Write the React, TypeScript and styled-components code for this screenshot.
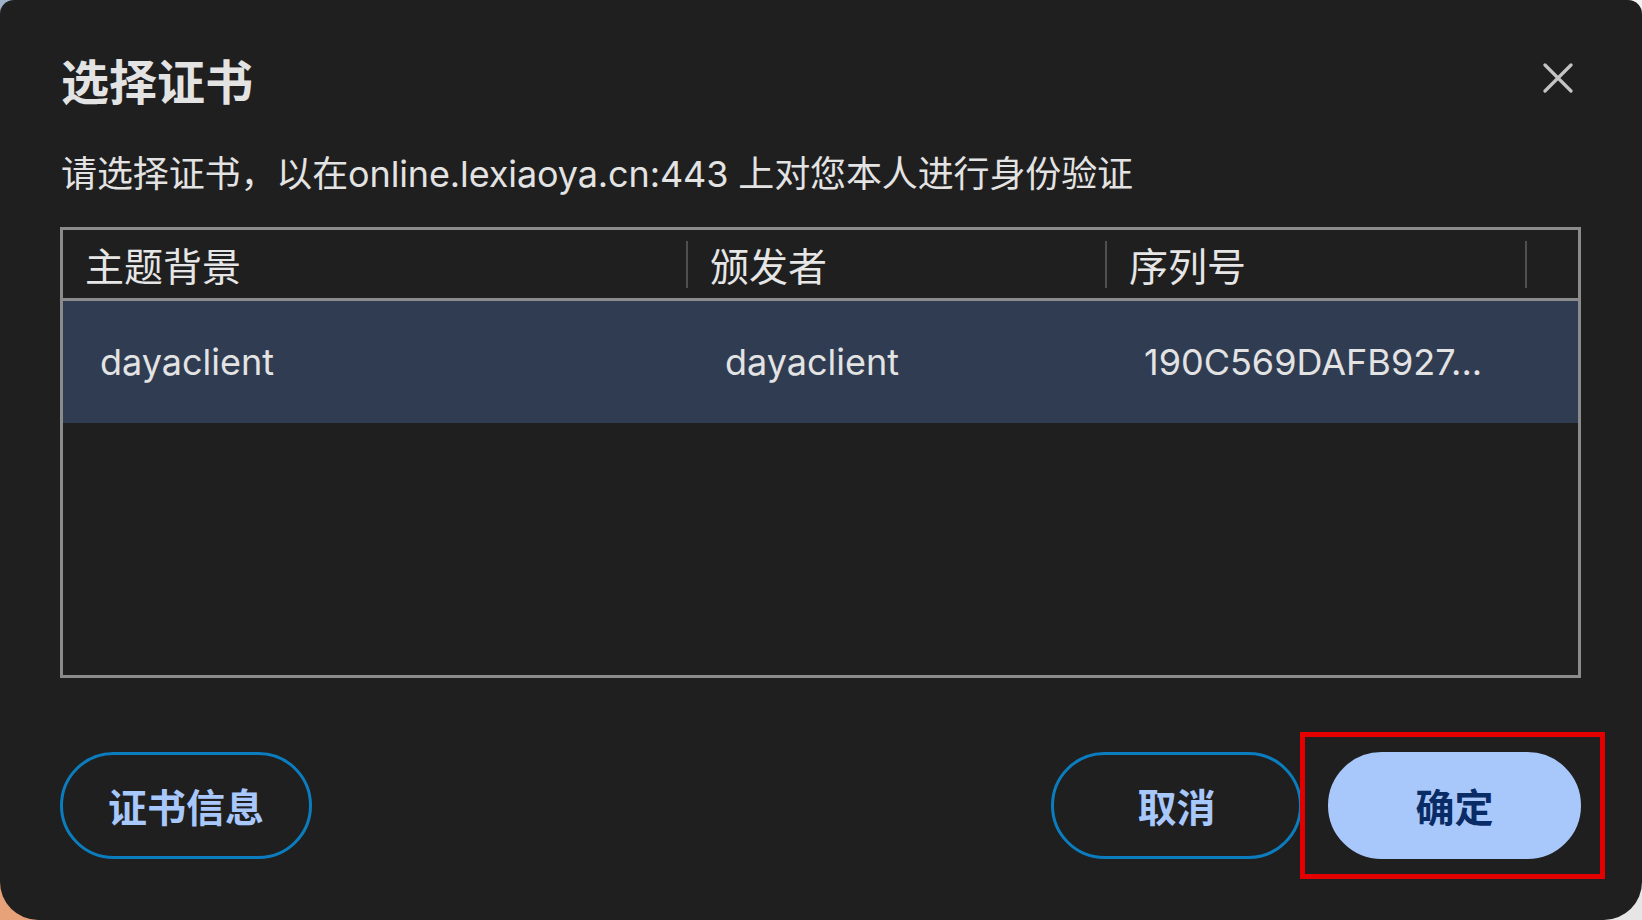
import React from "react";
import styled, { createGlobalStyle } from "styled-components";

const GlobalStyle = createGlobalStyle`
  html, body {
    margin: 0;
    padding: 0;
  }
  body {
    width: 1642px;
    height: 920px;
    overflow: hidden;
    background:
      linear-gradient(to right, #9fb1c9 0 50%, #f2f2f2 50% 100%) top / 100% 50% no-repeat,
      linear-gradient(to right, #e8a27a 0 50%, #e6e6e6 50% 100%) bottom / 100% 50% no-repeat;
    font-family: "Inter", "Noto Sans CJK SC", sans-serif;
  }
  * { box-sizing: border-box; }
`;

const Dialog = styled.div`
  width: 1642px;
  height: 920px;
  background: #1f1f1f;
  border-radius: 14px 14px 38px 38px;
  padding: 55px 61px 61px 60px;
  display: flex;
  flex-direction: column;
  color: #e3e3e3;
`;

const Header = styled.div`
  display: flex;
  align-items: center;
  justify-content: space-between;
  height: 48px;
`;

const Title = styled.h1`
  margin: 0;
  font-family: "Noto Sans CJK SC", sans-serif;
  font-size: 48px;
  line-height: 48px;
  font-weight: 700;
  color: #e3e3e3;
  padding-left: 1px;
`;

const CloseButton = styled.button`
  width: 46px;
  height: 46px;
  border: none;
  background: transparent;
  padding: 0;
  display: flex;
  align-items: center;
  justify-content: center;
  margin-top: -2px;
  cursor: pointer;
`;

const Subtitle = styled.p`
  margin: 53px 0 0 1px;
  font-size: 36px;
  line-height: 36px;
  letter-spacing: -0.12px;
  color: #e3e3e3;
  white-space: nowrap;
`;

const Table = styled.div`
  margin-top: 35px;
  height: 451px;
  border: 3px solid #8b8b8b;
  display: flex;
  flex-direction: column;
`;

const HeadRow = styled.div`
  display: grid;
  grid-template-columns: 625px 419px 420px 1fr;
  height: 71px;
  border-bottom: 3px solid #8b8b8b;
`;

const HeadCell = styled.div`
  display: flex;
  align-items: center;
  padding-left: 22px;
  font-family: "Noto Sans CJK SC", sans-serif;
  font-size: 39px;
  line-height: 39px;
  color: #e6e6e6;
`;

const Divider = styled.span`
  margin-left: auto;
  width: 2px;
  height: 47px;
  background: #4f4f4f;
`;

const DataRow = styled.div<{ $selected?: boolean }>`
  display: grid;
  grid-template-columns: 625px 419px 420px 1fr;
  height: 122px;
  background: ${(p) => (p.$selected ? "#303c52" : "transparent")};
`;

const DataCell = styled.div`
  display: flex;
  align-items: center;
  padding-left: 37px;
  font-size: 36px;
  line-height: 36px;
  color: #e3e3e3;
  white-space: nowrap;
`;

const Footer = styled.div`
  margin-top: auto;
  display: flex;
  align-items: center;
  justify-content: space-between;
`;

const RightGroup = styled.div`
  display: flex;
  align-items: center;
  gap: 26px;
`;

const PillButton = styled.button<{ $primary?: boolean; $w: number }>`
  width: ${(p) => p.$w}px;
  height: 107px;
  border-radius: 54px;
  border: 3px solid ${(p) => (p.$primary ? "#a8c7fa" : "#0b7dbf")};
  background: ${(p) => (p.$primary ? "#a8c7fa" : "transparent")};
  color: ${(p) => (p.$primary ? "#0a2c66" : "#a8c7fa")};
  font-family: "Noto Sans CJK SC", sans-serif;
  font-size: 39px;
  font-weight: 700;
  line-height: 39px;
  padding: 0;
  display: flex;
  align-items: center;
  justify-content: center;
  cursor: pointer;
`;

const Highlight = styled.span`
  position: relative;
  display: inline-flex;
  &::after {
    content: "";
    position: absolute;
    top: -20px;
    bottom: -20px;
    left: -28px;
    right: -24px;
    border: 5px solid #e50000;
    pointer-events: none;
  }
`;

const CloseIcon = () => (
  <svg width="30" height="30" viewBox="0 0 30 30" fill="none">
    <path d="M2 2 L28 28 M28 2 L2 28" stroke="#c4c4c4" strokeWidth="3.2" strokeLinecap="round" />
  </svg>
);

export default function App() {
  return (
    <>
      <GlobalStyle />
      <Dialog>
        <Header>
          <Title>选择证书</Title>
          <CloseButton aria-label="关闭">
            <CloseIcon />
          </CloseButton>
        </Header>
        <Subtitle>请选择证书，以在online.lexiaoya.cn:443 上对您本人进行身份验证</Subtitle>
        <Table>
          <HeadRow>
            <HeadCell>
              主题背景
              <Divider />
            </HeadCell>
            <HeadCell>
              颁发者
              <Divider />
            </HeadCell>
            <HeadCell>
              序列号
              <Divider />
            </HeadCell>
            <HeadCell />
          </HeadRow>
          <DataRow $selected>
            <DataCell>dayaclient</DataCell>
            <DataCell>dayaclient</DataCell>
            <DataCell>190C569DAFB927...</DataCell>
            <DataCell />
          </DataRow>
        </Table>
        <Footer>
          <PillButton $w={252}>证书信息</PillButton>
          <RightGroup>
            <PillButton $w={251}>取消</PillButton>
            <Highlight>
              <PillButton $primary $w={253}>确定</PillButton>
            </Highlight>
          </RightGroup>
        </Footer>
      </Dialog>
    </>
  );
}
